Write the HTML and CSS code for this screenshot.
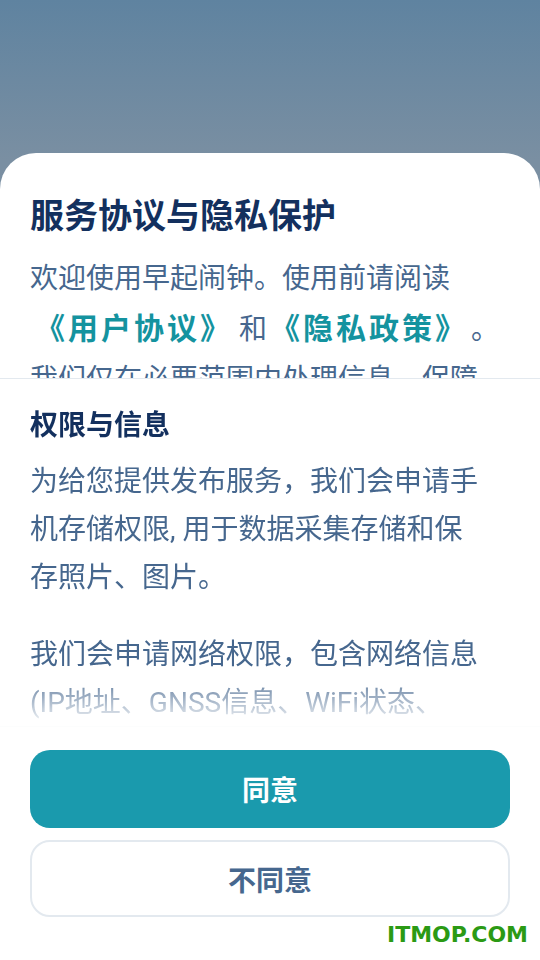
FILE: index.html
```html
<!DOCTYPE html>
<html lang="zh-CN">
<head>
    <meta charset="UTF-8">
    <meta name="viewport" content="width=device-width, initial-scale=1.0">
    <title>服务协议与隐私保护</title>
    <link rel="stylesheet" href="styles.css">
</head>
<body>
    <div class="backdrop"></div>
    <div class="sheet">
        <section class="intro">
            <h1>服务协议与隐私保护</h1>
            <p>欢迎使用早起闹钟。使用前请阅读<a class="link first">《用户协议》</a><span class="and">和</span><a class="link last">《隐私政策》</a>。我们仅在必要范围内处理信息，保障您的个人隐私安全。</p>
        </section>
        <section class="perm">
            <h2>权限与信息</h2>
            <p>为给您提供发布服务，我们会申请手机存储权限, 用于数据采集存储和保存照片、图片。</p>
            <p class="gap">我们会申请网络权限，包含网络信息(IP地址、GNSS信息、WiFi状态、<span class="nowrap">网络类型</span>等)，用于提供服务。</p>
        </section>
        <div class="actions">
            <button class="btn agree">同意</button>
            <button class="btn refuse">不同意</button>
        </div>
        <div class="mark">ITMOP.COM</div>
    </div>
</body>
</html>
```

FILE: styles.css
```css
body {
    margin: 0;
    height: 960px;
    display: flex;
    flex-direction: column;
    font-family: Roboto, "Noto Sans CJK SC", sans-serif;
    background: linear-gradient(180deg, #5f83a0 0%, #7a8fa2 160px);
    overflow: hidden;
}

.backdrop {
    height: 153px;
    flex-shrink: 0;
}

.sheet {
    flex: 1;
    display: flex;
    flex-direction: column;
    background: #fff;
    border-radius: 36px 36px 0 0;
}

.intro {
    height: 226px;
    padding: 43px 36px 0 30px;
    box-sizing: border-box;
    overflow: hidden;
    border-bottom: 1px solid #e3e9ef;
    flex-shrink: 0;
}

h1 {
    margin: 0;
    font-size: 34px;
    line-height: 41px;
    font-weight: 700;
    color: #13305e;
    white-space: nowrap;
}

.intro p {
    margin: 17px 0 0;
    font-size: 28px;
    line-height: 50px;
    color: #46678e;
}

.link {
    font-size: 30px;
    font-weight: 700;
    color: #14939f;
    letter-spacing: 3px;
}

.link.first {
    margin-left: 5px;
}

.link.last {
    margin-right: 18px;
}

.and {
    margin: 0 3px 0 6px;
}

.perm {
    height: 348px;
    padding: 29px 62px 0 30px;
    box-sizing: border-box;
    overflow: hidden;
    border-bottom: 1px solid #e3e9ef;
    flex-shrink: 0;
    -webkit-mask-image: linear-gradient(180deg, #000 292px, rgba(0, 0, 0, 0.1) 342px);
    mask-image: linear-gradient(180deg, #000 292px, rgba(0, 0, 0, 0.1) 342px);
}

h2 {
    margin: 0;
    font-size: 28px;
    line-height: 36px;
    font-weight: 700;
    color: #13305e;
}

.perm p {
    margin: 14px 0 0;
    font-size: 28px;
    line-height: 48px;
    color: #46678e;
}

.perm p.gap {
    margin-top: 29px;
}

.nowrap {
    white-space: nowrap;
}

.actions {
    display: flex;
    flex-direction: column;
    gap: 12px;
    padding: 23px 30px 0;
}

.btn {
    height: 78px;
    border-radius: 20px;
    font-family: inherit;
    font-size: 28px;
    font-weight: 700;
    cursor: pointer;
}

.agree {
    background: #1a9aad;
    color: #fff;
    border: none;
}

.refuse {
    background: #fff;
    color: #46678e;
    border: 2px solid #e3e9ef;
    height: 77px;
}

.mark {
    text-align: right;
    padding: 5px 12px 0 0;
    font-family: "DejaVu Sans", Verdana, sans-serif;
    font-size: 22px;
    font-weight: 700;
    color: #2b9a14;
}
```
